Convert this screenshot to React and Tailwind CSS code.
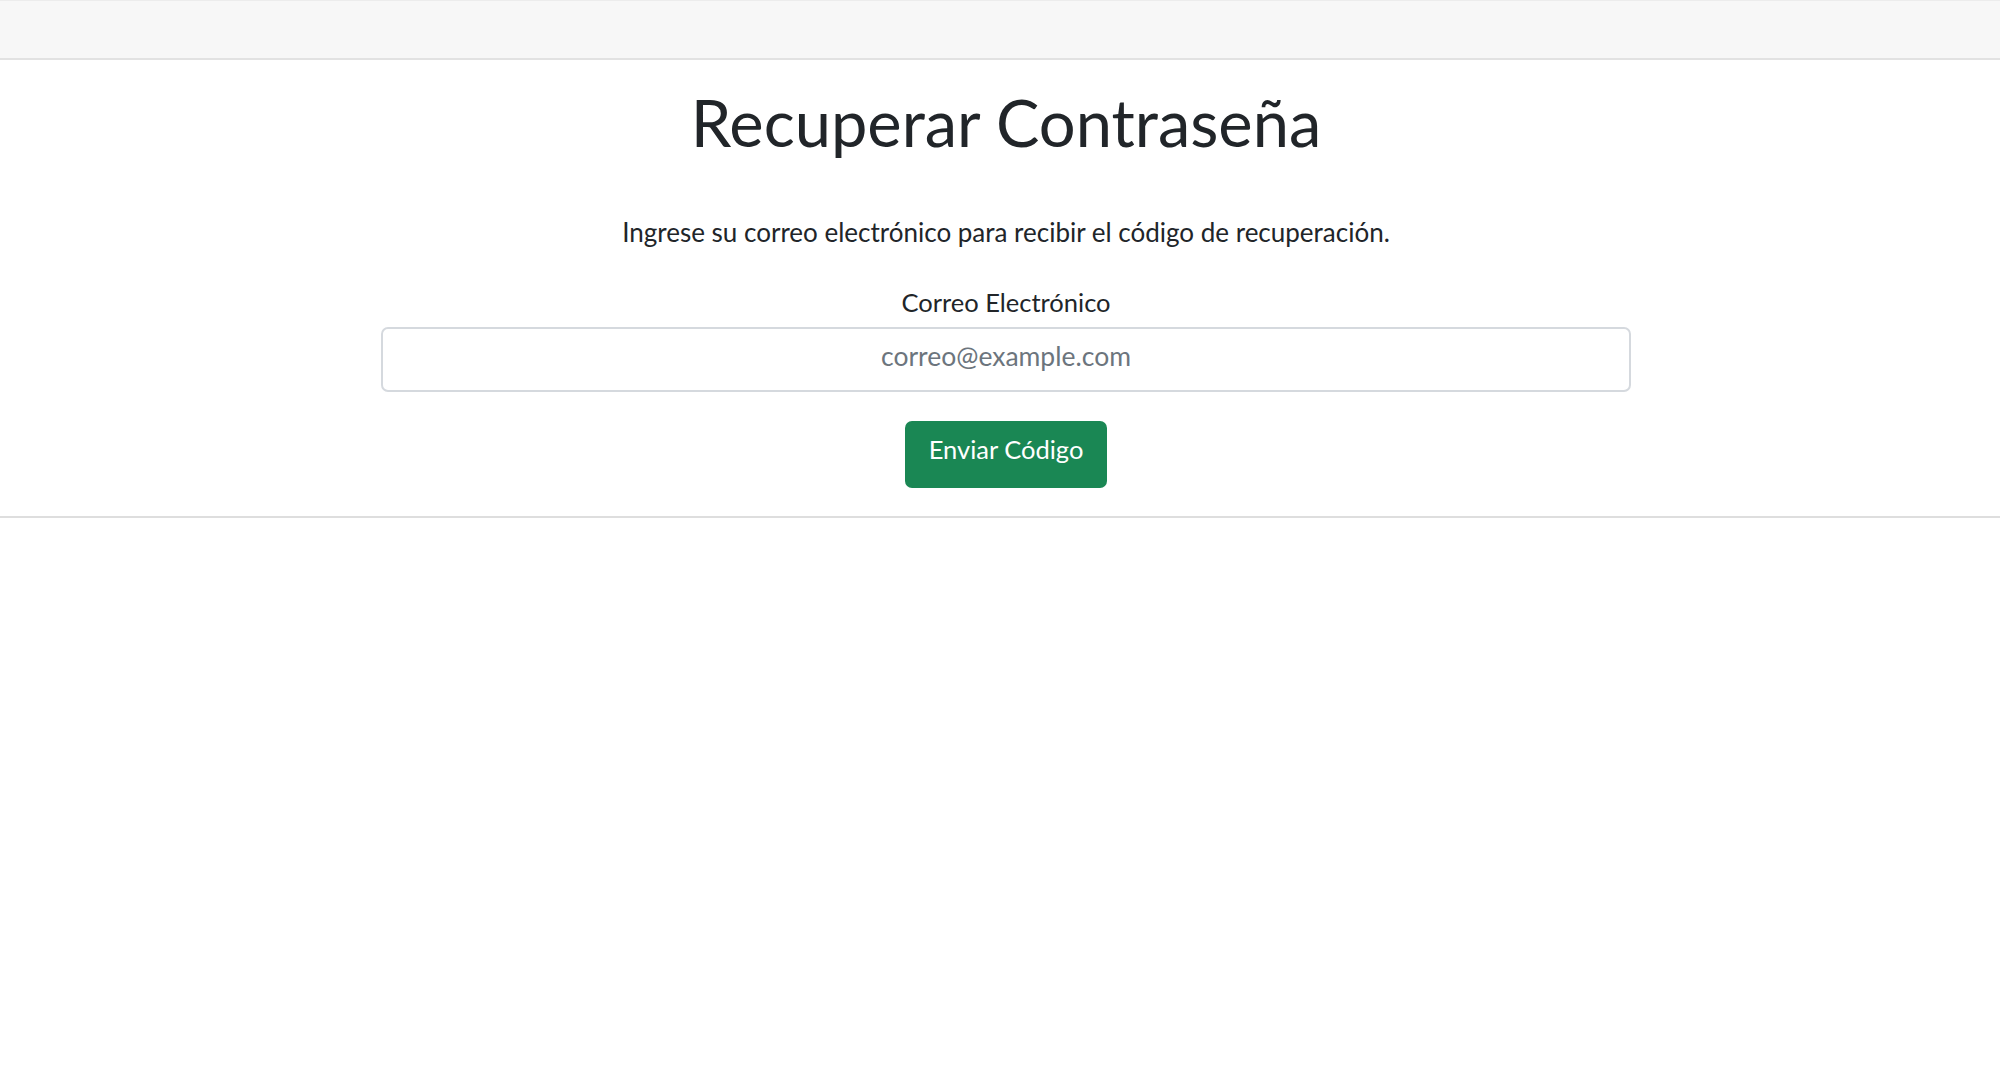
export default function App() {
  return (
    <div className="min-h-[1086px] bg-white text-[#212529]" style={{ fontFamily: "Lato, 'Noto Sans', sans-serif" }}>
      <header className="h-[60px] bg-[#f7f7f7] border-t border-t-[#ececec] border-b-2 border-b-[#e2e2e2]" />
      <main className="flex flex-col items-center border-b-2 border-b-[#dedede] pb-[28px] pl-[12px]">
        <h1 className="mt-[23px] text-[65px] leading-[1.2] font-normal text-[#212529]">Recuperar Contraseña</h1>
        <p className="mt-[52px] text-[26px] leading-[39px] text-[#212529]">
          Ingrese su correo electrónico para recibir el código de recuperación.
        </p>
        <label className="mt-[31px] text-[25.5px] leading-[38px] text-[#212529]">Correo Electrónico</label>
        <input
          type="email"
          placeholder="correo@example.com"
          className="mt-[6px] w-[1250px] h-[65px] rounded-[7px] border-2 border-[#d5d9de] bg-white text-center text-[26.5px] pb-[8px] placeholder:text-[#6c757d] outline-none"
        />
        <button className="mt-[29px] w-[202px] h-[67px] rounded-[7px] bg-[#1a8754] text-white text-[25.5px] leading-none pb-[9px] flex items-center justify-center">
          Enviar Código
        </button>
      </main>
    </div>
  );
}
